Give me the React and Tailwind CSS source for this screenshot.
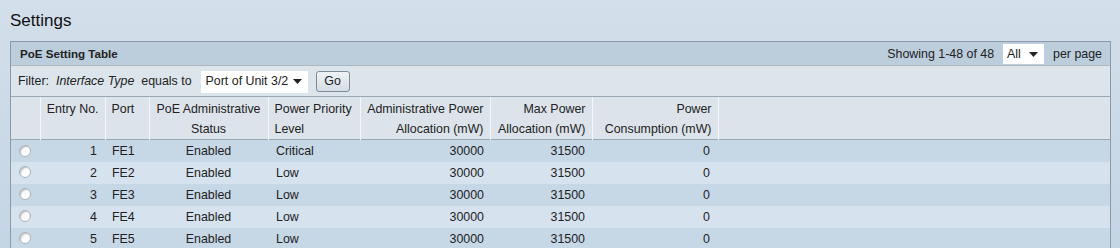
import React from 'react';

const rows = [
  { id: 1, port: 'FE1', status: 'Enabled', level: 'Critical', admin: 30000, max: 31500, used: 0 },
  { id: 2, port: 'FE2', status: 'Enabled', level: 'Low', admin: 30000, max: 31500, used: 0 },
  { id: 3, port: 'FE3', status: 'Enabled', level: 'Low', admin: 30000, max: 31500, used: 0 },
  { id: 4, port: 'FE4', status: 'Enabled', level: 'Low', admin: 30000, max: 31500, used: 0 },
  { id: 5, port: 'FE5', status: 'Enabled', level: 'Low', admin: 30000, max: 31500, used: 0 },
];

function Caret() {
  return (
    <svg width="9" height="5" viewBox="0 0 9 5" className="shrink-0">
      <path d="M0 0h9L4.5 5z" fill="#222" />
    </svg>
  );
}

function Radio() {
  return (
    <span className="inline-block w-[12px] h-[12px] rounded-full border border-[#a9b3bc] bg-gradient-to-br from-[#dfe3e7] via-white to-white shadow-[inset_1px_1px_1px_rgba(0,0,0,0.2)]" />
  );
}

export default function App() {
  const th = 'border-l border-[#f4f7fa] font-normal align-top px-[6px] pt-[2px] leading-[20px]';
  return (
    <div
      className="w-[1120px] h-[248px] overflow-hidden text-[12.4px] text-[#222] bg-gradient-to-b from-[#d3dfea] to-[#c4d5e5]"
      style={{ fontFamily: '"Liberation Sans", Arial, sans-serif' }}
    >
      <h1 className="h-[41px] pl-[10px] pt-[10px] text-[17px] leading-[22px] text-[#111]">Settings</h1>

      <div className="ml-[10px] w-[1101px] border-l border-r border-t border-[#8c9aa7]">
        {/* title bar */}
        <div className="h-[24px] bg-[#bccddc] flex items-center pt-[1px] pl-[9px] pr-[8px] border-b border-[#a9b7c4]">
          <span className="font-bold text-[11.6px]">PoE Setting Table</span>
          <div className="ml-auto flex items-center">
            <span>Showing 1-48 of 48</span>
            <div className="ml-[9px] w-[41px] h-[20px] bg-white flex items-center pl-[4px] pr-[6px] justify-between">
              <span>All</span>
              <Caret />
            </div>
            <span className="ml-[9px]">per page</span>
          </div>
        </div>

        {/* filter bar */}
        <div className="h-[31px] bg-[#dde5ec] flex items-center pt-[1px] pl-[7px] border-b border-[#9aa8b5]">
          <span>Filter:</span>
          <span className="ml-[7px] italic">Interface Type</span>
          <span className="ml-[7px]">equals to</span>
          <div className="ml-[9px] w-[107px] h-[22px] bg-white flex items-center pl-[5px] pr-[6px] justify-between">
            <span>Port of Unit 3/2</span>
            <Caret />
          </div>
          <button className="ml-[8px] w-[34px] h-[21px] rounded-[3px] border border-[#7f8c98] bg-gradient-to-b from-[#f0f3f6] to-[#d5dde4] text-[12.4px] leading-none">
            Go
          </button>
        </div>

        <table className="w-full border-collapse">
          <thead>
            <tr className="h-[42px] bg-[#dce3ea] border-b border-[#9aa8b5]">
              <th className="w-[29px] align-top" />
              <th className={`${th} w-[65px] text-right`}>Entry No.</th>
              <th className={`${th} w-[44px] text-left`}>Port</th>
              <th className={`${th} w-[119px] text-center`}>
                PoE Administrative
                <br />
                Status
              </th>
              <th className={`${th} w-[92px] text-left`}>
                Power Priority
                <br />
                Level
              </th>
              <th className={`${th} w-[130px] text-right`}>
                Administrative Power
                <br />
                Allocation (mW)
              </th>
              <th className={`${th} w-[102px] text-right`}>
                Max Power
                <br />
                Allocation (mW)
              </th>
              <th className={`${th} w-[126px] text-right`}>
                Power
                <br />
                Consumption (mW)
              </th>
              <th className="border-l border-[#f4f7fa]" />
            </tr>
          </thead>
          <tbody>
            {rows.map((r, i) => (
              <tr key={r.id} className={`h-[22px] ${i % 2 === 0 ? 'bg-[#c6d7e6]' : 'bg-[#d6e2ee]'}`}>
                <td className="pl-[8px] pt-[2px] align-middle leading-none">
                  <Radio />
                </td>
                <td className="text-right pr-[8px] pt-[2px]">{r.id}</td>
                <td className="pl-[7px] pt-[2px]">{r.port}</td>
                <td className="text-center pt-[2px]">{r.status}</td>
                <td className="pl-[8px] pt-[2px]">{r.level}</td>
                <td className="text-right pr-[6px] pt-[2px]">{r.admin}</td>
                <td className="text-right pr-[7px] pt-[2px]">{r.max}</td>
                <td className="text-right pr-[8px] pt-[2px]">{r.used}</td>
                <td />
              </tr>
            ))}
          </tbody>
        </table>
      </div>
    </div>
  );
}
